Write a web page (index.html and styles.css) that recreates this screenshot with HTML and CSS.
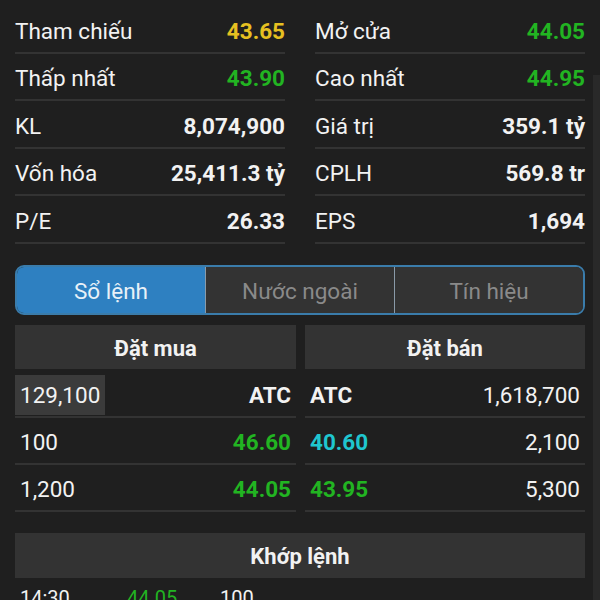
FILE: index.html
```html
<!DOCTYPE html>
<html lang="vi">
  <head>
    <meta charset="UTF-8" />
    <meta name="viewport" content="width=device-width, initial-scale=1.0" />
    <title>Chi tiết cổ phiếu</title>
    <link rel="stylesheet" href="styles.css">
  </head>
  <body>
    <div class="scroll-thumb"></div>

    <div class="stats">
      <div class="stat"><span>Tham chiếu</span><b class="ref">43.65</b></div>
      <div class="stat"><span>Mở cửa</span><b class="up">44.05</b></div>
      <div class="stat"><span>Thấp nhất</span><b class="up">43.90</b></div>
      <div class="stat"><span>Cao nhất</span><b class="up">44.95</b></div>
      <div class="stat"><span>KL</span><b>8,074,900</b></div>
      <div class="stat"><span>Giá trị</span><b>359.1 tỷ</b></div>
      <div class="stat"><span>Vốn hóa</span><b>25,411.3 tỷ</b></div>
      <div class="stat"><span>CPLH</span><b>569.8 tr</b></div>
      <div class="stat"><span>P/E</span><b>26.33</b></div>
      <div class="stat"><span>EPS</span><b>1,694</b></div>
    </div>

    <div class="tabs">
      <div class="tab active">Sổ lệnh</div>
      <div class="tab">Nước ngoài</div>
      <div class="tab">Tín hiệu</div>
    </div>

    <div class="book">
      <div class="side">
        <div class="side-head">Đặt mua</div>
        <div class="book-row">
          <span class="vol-box">129,100</span><b>ATC</b>
        </div>
        <div class="book-row"><span>100</span><b class="up">46.60</b></div>
        <div class="book-row"><span>1,200</span><b class="up">44.05</b></div>
      </div>
      <div class="side">
        <div class="side-head">Đặt bán</div>
        <div class="book-row"><b>ATC</b><span>1,618,700</span></div>
        <div class="book-row"><b class="ceil">40.60</b><span>2,100</span></div>
        <div class="book-row"><b class="up">43.95</b><span>5,300</span></div>
      </div>
    </div>

    <div class="match">
      <div class="side-head">Khớp lệnh</div>
      <div class="match-row">
        <span class="time">14:30</span>
        <span class="price up">44.05</span>
        <span>100</span>
      </div>
    </div>
  </body>
</html>
```

FILE: styles.css
```css
body {
  margin: 0;
  padding: 6px 15px 0;
  background-color: #1f1f1f;
  color: #f2f2f2;
  font-family: Roboto, "Noto Sans", sans-serif;
  font-size: 22.5px;
  overflow: hidden;
}
.scroll-thumb {
  position: absolute;
  top: 75px;
  right: 0;
  width: 7px;
  height: 525px;
  background-color: #292929;
}
.stats {
  display: grid;
  grid-template-columns: 1fr 1fr;
  column-gap: 30px;
}
.stat {
  display: flex;
  justify-content: space-between;
  align-items: center;
  box-sizing: border-box;
  height: 47.5px;
  padding-top: 4px;
  border-bottom: 2px solid #333;
}
.stat b {
  font-weight: 700;
}
.ref {
  color: #e6c021;
}
.up {
  color: #22b422;
}
.ceil {
  color: #1fc6cf;
}

.tabs {
  display: flex;
  margin-top: 21px;
  height: 46px;
  border: 2px solid #3a7cab;
  border-radius: 9px;
  overflow: hidden;
}
.tab {
  flex: 1;
  display: flex;
  justify-content: center;
  align-items: center;
  padding-top: 2px;
  background-color: #333;
  color: #8a8a8a;
  font-size: 22.5px;
}
.tab + .tab {
  border-left: 1px solid #8a9aa8;
}
.tab.active {
  background-color: #2e80c1;
  color: #e8f1f8;
}

.book {
  display: flex;
  gap: 9px;
  margin-top: 10px;
}
.side {
  flex: 1;
}
.side:first-child {
  flex: 0 0 281px;
}
.side-head {
  display: flex;
  justify-content: center;
  align-items: center;
  box-sizing: border-box;
  height: 44px;
  padding-top: 3px;
  background-color: #333;
  font-weight: 700;
  font-size: 22px;
}
.book-row {
  display: flex;
  justify-content: space-between;
  align-items: center;
  box-sizing: border-box;
  height: 47px;
  padding: 3px 5px 0;
  border-bottom: 2px solid #333;
}
.book-row:nth-child(2) {
  margin-top: 2px;
}
.book-row b {
  font-weight: 700;
}
.vol-box {
  margin-left: -5px;
  padding: 7px 5px 7px 5px;
  background-color: #3b3b3b;
}

.match {
  margin-top: 21px;
}
.match .side-head {
  height: 45px;
}
.match-row {
  display: flex;
  padding: 8px 5px 0;
  font-size: 20px;
}
.match-row .time {
  width: 107px;
}
.match-row .price {
  width: 93px;
}
```
